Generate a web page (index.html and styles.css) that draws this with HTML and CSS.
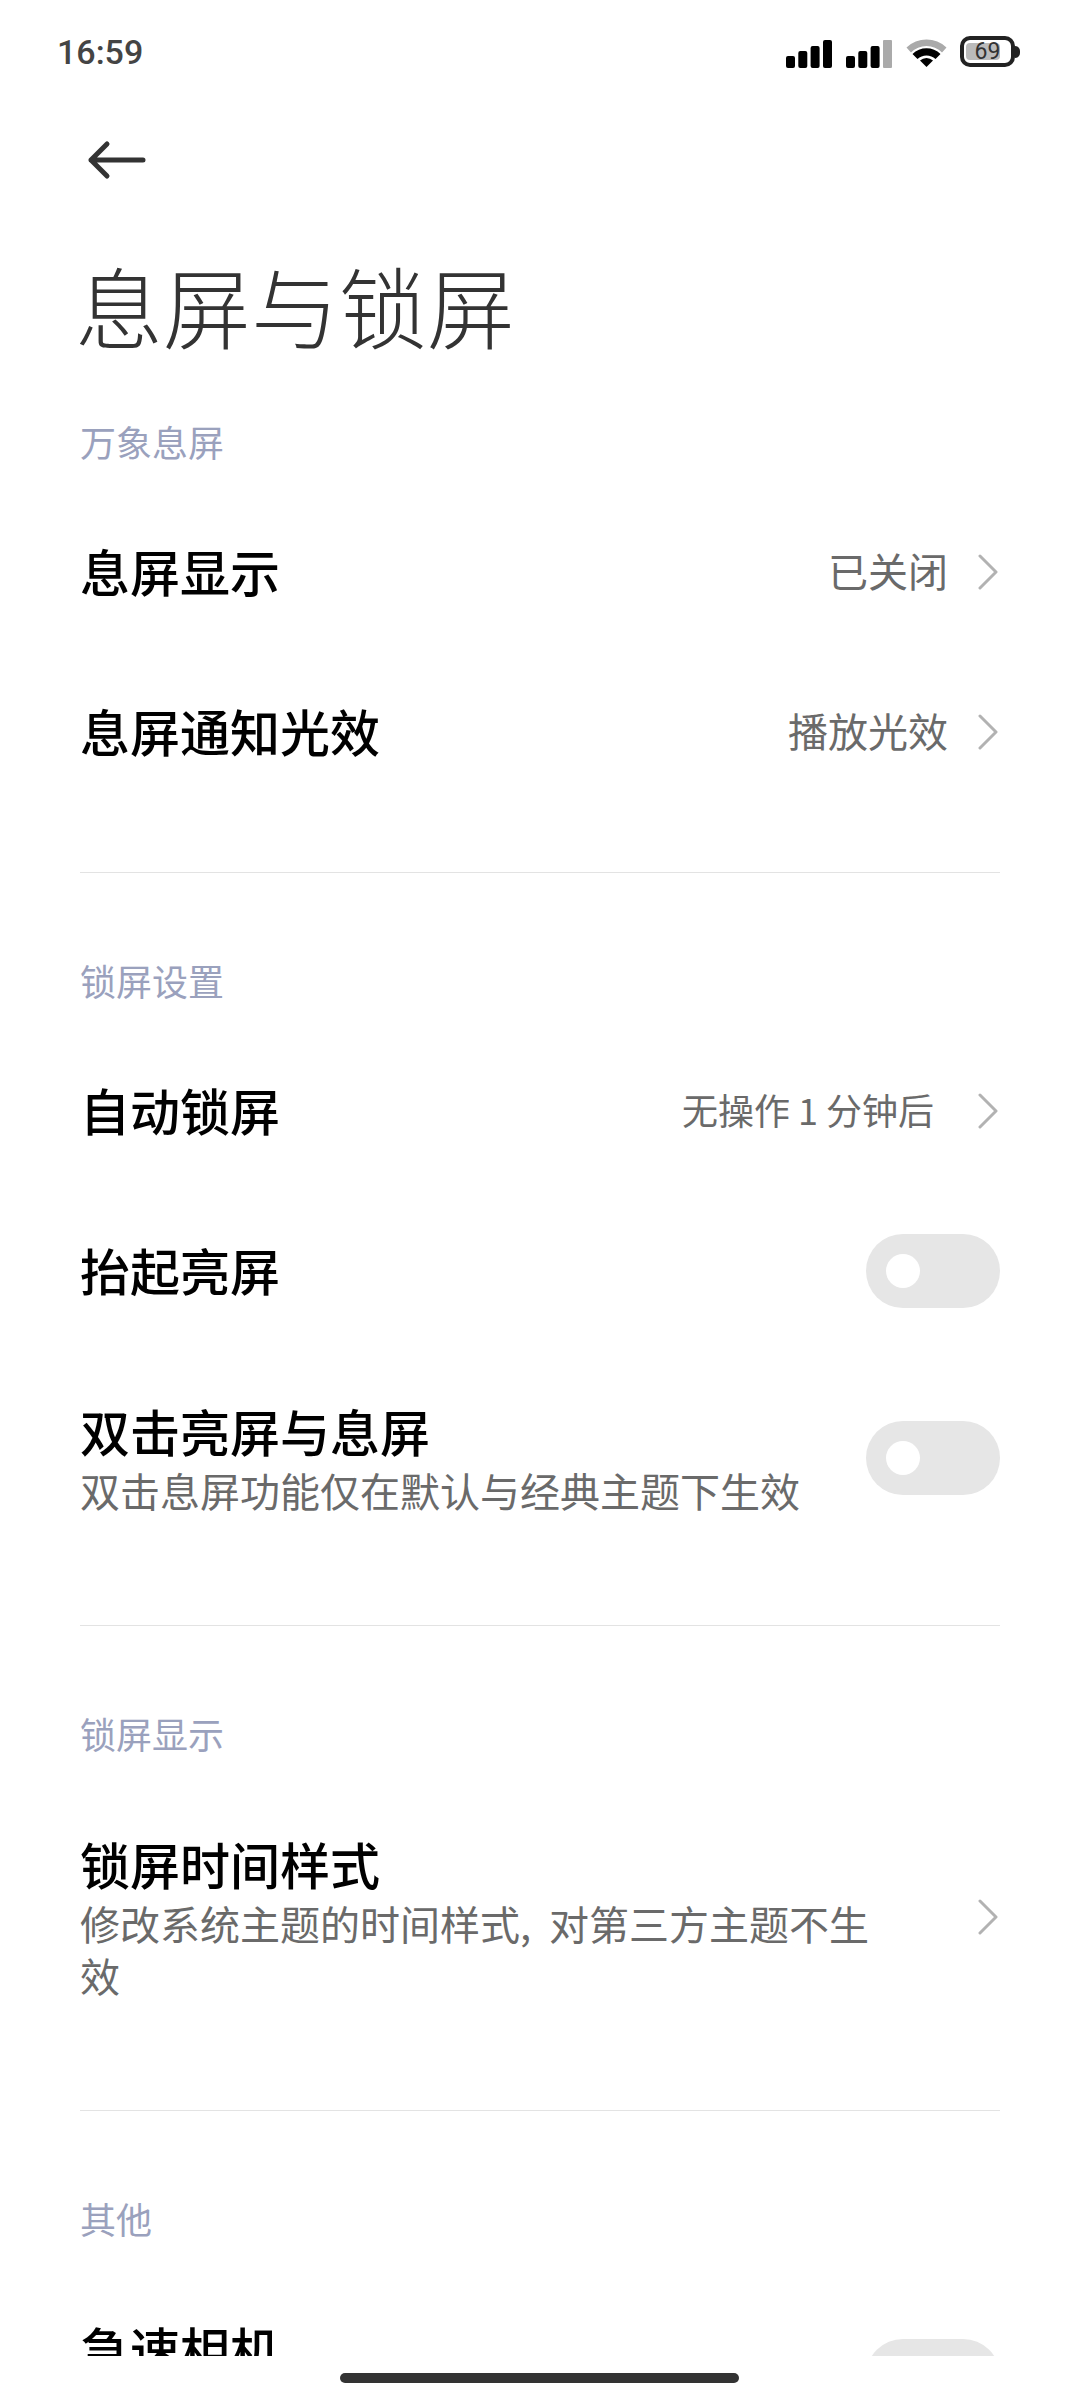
FILE: index.html
```html
<!DOCTYPE html>
<html lang="zh-CN">
<head>
    <meta charset="UTF-8">
    <meta name="viewport" content="width=device-width, initial-scale=1.0">
    <title>息屏与锁屏</title>
    <link rel="stylesheet" href="styles.css">
</head>
<body>
    <div class="status-bar">
        <span class="clock">16:59</span>
        <div class="status-icons">
            <svg class="signal" viewBox="0 0 46 28"><rect x="0" y="16" width="9" height="12" rx="2"/><rect x="12.3" y="11" width="9" height="17" rx="2"/><rect x="24.6" y="6" width="9" height="22" rx="2"/><rect x="37" y="0" width="9" height="28" rx="2"/></svg>
            <svg class="signal" viewBox="0 0 46 28"><rect x="0" y="16" width="9" height="12" rx="2"/><rect x="12.3" y="11" width="9" height="17" rx="2"/><rect x="24.6" y="6" width="9" height="22" rx="2"/><rect x="37" y="0" width="9" height="28" rx="1" fill="#aaa"/></svg>
            <svg class="wifi" viewBox="0 0 41 29"><path d="M0.5 9.5 A29 29 0 0 1 40.5 9.5 L36 14.5 A22 22 0 0 0 5 14.5 Z" fill="#aaa"/><path d="M6.5 16 A20 20 0 0 1 34.5 16 L29.5 21 A13 13 0 0 0 11.5 21 Z"/><path d="M14 22.5 A9.5 9.5 0 0 1 27 22.5 L20.5 29 Z"/></svg>
            <div class="battery">
                <div class="battery-body">
                    <div class="battery-fill"></div>
                    <span class="battery-num">69</span>
                </div>
                <div class="battery-nub"></div>
            </div>
        </div>
    </div>

    <div class="screen">
        <div class="toolbar">
            <svg class="back" viewBox="0 0 60 40"><path d="M57 20H5M21 4L5 20l16 16"/></svg>
        </div>
        <h1 class="page-title">息屏与锁屏</h1>

        <div class="section">
            <div class="section-label">万象息屏</div>
            <div class="row">
                <div class="row-text"><div class="row-title">息屏显示</div></div>
                <span class="row-value">已关闭</span>
                <svg class="chevron" viewBox="0 0 20 36"><path d="M2 2l16 16L2 34"/></svg>
            </div>
            <div class="row">
                <div class="row-text"><div class="row-title">息屏通知光效</div></div>
                <span class="row-value">播放光效</span>
                <svg class="chevron" viewBox="0 0 20 36"><path d="M2 2l16 16L2 34"/></svg>
            </div>
        </div>

        <div class="section">
            <div class="section-label">锁屏设置</div>
            <div class="row">
                <div class="row-text"><div class="row-title">自动锁屏</div></div>
                <span class="row-value small">无操作 1 分钟后</span>
                <svg class="chevron" viewBox="0 0 20 36"><path d="M2 2l16 16L2 34"/></svg>
            </div>
            <div class="row">
                <div class="row-text"><div class="row-title">抬起亮屏</div></div>
                <div class="toggle"><div class="knob"></div></div>
            </div>
            <div class="row tall">
                <div class="row-text">
                    <div class="row-title">双击亮屏与息屏</div>
                    <div class="row-sub">双击息屏功能仅在默认与经典主题下生效</div>
                </div>
                <div class="toggle"><div class="knob"></div></div>
            </div>
        </div>

        <div class="section">
            <div class="section-label">锁屏显示</div>
            <div class="row tall">
                <div class="row-text narrow">
                    <div class="row-title">锁屏时间样式</div>
                    <div class="row-sub">修改系统主题的时间样式, 对第三方主题不生效</div>
                </div>
                <svg class="chevron" viewBox="0 0 20 36"><path d="M2 2l16 16L2 34"/></svg>
            </div>
        </div>

        <div class="section last">
            <div class="section-label">其他</div>
            <div class="row tall">
                <div class="row-text no-sub"><div class="row-title">急速相机</div></div>
                <div class="toggle"><div class="knob"></div></div>
            </div>
        </div>
    </div>

    <div class="nav-bar"><div class="home-pill"></div></div>
</body>
</html>
```

FILE: styles.css
```css
* {
    box-sizing: border-box;
}
html, body {
    margin: 0;
    height: 2400px;
    overflow: hidden;
    background-color: #fff;
}
body {
    display: flex;
    flex-direction: column;
    font-family: "Noto Sans CJK SC", "Noto Sans", sans-serif;
    color: #000;
}
.status-bar {
    flex: none;
    height: 80px;
    padding: 23px 60px 0 57px;
    display: flex;
    justify-content: space-between;
    align-items: center;
}
.clock {
    font-family: Roboto, sans-serif;
    font-size: 34px;
    font-weight: 500;
    color: #444;
}
.status-icons {
    display: flex;
    align-items: center;
    gap: 14px;
}
.signal {
    width: 46px;
    height: 28px;
    margin-top: 4px;
}
.wifi {
    width: 41px;
    height: 29px;
    margin-top: 2px;
}
.battery {
    display: flex;
    align-items: center;
    margin-left: -1px;
}
.battery-body {
    position: relative;
    width: 55px;
    height: 31px;
    border: 4px solid #222;
    border-radius: 10px;
    overflow: hidden;
}
.battery-fill {
    position: absolute;
    top: 3px;
    left: 2px;
    bottom: 3px;
    width: 34px;
    background-color: #bbb;
    border-radius: 4px;
}
.battery-num {
    position: absolute;
    top: 0;
    left: 0;
    right: 0;
    text-align: center;
    font-family: Roboto, sans-serif;
    font-size: 23px;
    line-height: 23px;
    color: #333;
}
.battery-nub {
    width: 5px;
    height: 12px;
    background-color: #222;
    border-radius: 0 6px 6px 0;
}
.screen {
    flex: none;
    height: 2276px;
    overflow: hidden;
}
.toolbar {
    height: 160px;
    padding: 40px 0 0 86px;
    display: flex;
    align-items: flex-start;
}
.back {
    width: 60px;
    height: 40px;
    margin-top: 20px;
    fill: none;
    stroke: #333;
    stroke-width: 5;
    stroke-linecap: round;
    stroke-linejoin: round;
}
.page-title {
    margin: 0;
    height: 178px;
    padding: 0 0 0 75px;
    font-size: 88px;
    line-height: 128px;
    font-weight: 300;
    color: #333;
}
.section {
    padding-bottom: 60px;
    margin: 0 80px 84px;
    border-bottom: 1px solid #e3e3e3;
}
.section.last {
    border-bottom: none;
}
.section-label {
    height: 50px;
    margin-bottom: 24px;
    font-size: 36px;
    line-height: 47px;
    color: #9aa1bd;
}
.row {
    min-height: 160px;
    display: flex;
    align-items: center;
}
.row.tall {
    padding: 45px 0;
}
.row-text {
    flex: 1;
    min-width: 0;
    padding-bottom: 4px;
}
.row-text.narrow {
    padding-right: 90px;
}
.row-text.no-sub {
    padding-bottom: 56px;
}
.row-title {
    font-size: 50px;
    line-height: 68px;
    font-weight: 500;
}
.row-sub {
    font-size: 40px;
    line-height: 52px;
    word-spacing: 9px;
    color: #6a6a6a;
}
.row-value {
    padding-bottom: 4px;
    font-size: 40px;
    color: #6a6a6a;
    margin-right: 30px;
}
.row-value.small {
    font-size: 36px;
    margin-right: 44px;
}
.chevron {
    flex: none;
    width: 20px;
    height: 36px;
    margin-right: 2px;
    fill: none;
    stroke: #b2b2b2;
    stroke-width: 3;
    stroke-linecap: round;
    stroke-linejoin: round;
}
.toggle {
    flex: none;
    width: 134px;
    height: 74px;
    padding: 20px;
    background-color: #e6e6e6;
    border-radius: 37px;
}
.knob {
    width: 34px;
    height: 34px;
    background-color: #fff;
    border-radius: 50%;
}
.nav-bar {
    flex: none;
    height: 44px;
    padding-top: 17px;
}
.home-pill {
    width: 399px;
    height: 10px;
    margin-left: 340px;
    background-color: #333;
    border-radius: 5px;
}
```
